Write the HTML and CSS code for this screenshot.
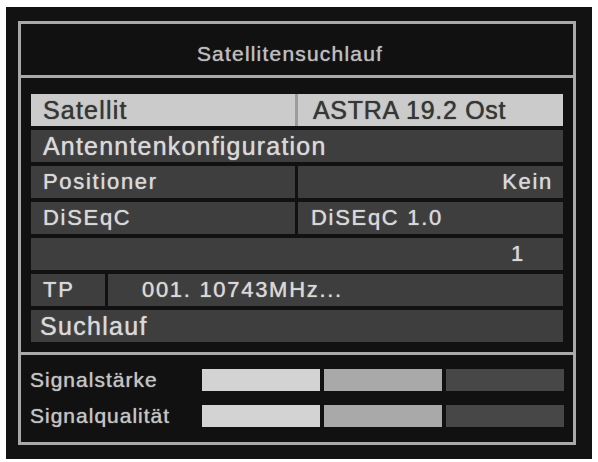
FILE: index.html
```html
<!DOCTYPE html>
<html lang="de">
<head>
<meta charset="utf-8">
<title>Satellitensuchlauf</title>
<link rel="stylesheet" href="styles.css">
</head>
<body>
<div class="screen">
  <div class="frame">
    <div class="title">Satellitensuchlauf</div>
    <div class="menu">
      <div class="row split sel">
        <div class="cell big">Satellit</div>
        <div class="cell big val astra">ASTRA 19.2 Ost</div>
      </div>
      <div class="row">
        <div class="cell big">Antenntenkonfiguration</div>
      </div>
      <div class="row split">
        <div class="cell">Positioner</div>
        <div class="cell right">Kein</div>
      </div>
      <div class="row split">
        <div class="cell">DiSEqC</div>
        <div class="cell val">DiSEqC 1.0</div>
      </div>
      <div class="row">
        <div class="cell right one">1</div>
      </div>
      <div class="row tp">
        <div class="cell">TP</div>
        <div class="cell tpval">001. 10743MHz...</div>
      </div>
      <div class="row">
        <div class="cell big suche">Suchlauf</div>
      </div>
    </div>
    <div class="signal">
      <div class="sigrow">
        <div class="label">Signalstärke</div>
        <div class="bars">
          <div class="bar b1"></div>
          <div class="bar b2"></div>
          <div class="bar b3"></div>
        </div>
      </div>
      <div class="sigrow">
        <div class="label">Signalqualität</div>
        <div class="bars">
          <div class="bar b1"></div>
          <div class="bar b2"></div>
          <div class="bar b3"></div>
        </div>
      </div>
    </div>
  </div>
</div>
</body>
</html>
```
FILE: styles.css
```css
html, body {
  margin: 0;
  padding: 0;
  background: #ffffff;
}

body {
  font-family: "Liberation Sans", Arial, sans-serif;
  color: #d6d6d6;
}

.screen {
  box-sizing: border-box;
  width: 586px;
  height: 452px;
  margin: 7px 0 0 6px;
  padding: 14px 16px 14px 12px;
  background: #121212;
}

.frame {
  box-sizing: border-box;
  height: 100%;
  border: 3px solid #a9a9a9;
  display: flex;
  flex-direction: column;
  background: #111111;
}

.title {
  box-sizing: border-box;
  height: 54px;
  padding: 8px 14px 0 0;
  line-height: 43px;
  font-size: 21px;
  letter-spacing: 1.2px;
  text-align: center;
  color: #bdbdbd;
  text-shadow: 0 0 1px #bdbdbd;
  border-bottom: 3px solid #a9a9a9;
}

.menu {
  box-sizing: border-box;
  height: 277px;
  padding: 16px 10px 13px 10px;
  display: flex;
  flex-direction: column;
  gap: 4px;
  border-bottom: 3px solid #a9a9a9;
}

.row {
  height: 32px;
  display: grid;
  grid-template-columns: 1fr;
}

.row.split {
  grid-template-columns: 264px 1fr;
  column-gap: 3px;
}

.row.tp {
  grid-template-columns: 74px 1fr;
  column-gap: 3px;
}

.cell {
  background: #3e3e3e;
  height: 32px;
  line-height: 32px;
  padding-left: 12px;
  font-size: 22px;
  letter-spacing: 1.7px;
  white-space: nowrap;
  color: #d8d8d8;
  text-shadow: 0 0 1px #d8d8d8;
}

.cell.big {
  font-size: 25px;
  letter-spacing: 1.2px;
}

.cell.suche {
  padding-left: 9px;
  letter-spacing: 1.3px;
}

.cell.val {
  padding-left: 13px;
}

.cell.astra {
  padding-left: 15px;
  letter-spacing: 0.7px;
}

.cell.right {
  text-align: right;
  padding-left: 0;
  padding-right: 10px;
}

.cell.one {
  padding-right: 38px;
}

.cell.tpval {
  padding-left: 34px;
}

.row.sel {
  background: #9c9c9c;
}

.row.sel .cell {
  background: #cbcbcb;
  color: #363636;
  text-shadow: 0 0 1px #363636;
}

.signal {
  flex: 1;
  padding: 14px 0 0 9px;
  display: flex;
  flex-direction: column;
  gap: 14px;
}

.sigrow {
  height: 22px;
  display: flex;
  align-items: center;
}

.label {
  width: 172px;
  font-size: 21px;
  letter-spacing: 1px;
  color: #c3c3c3;
  text-shadow: 0 0 1px #c3c3c3;
  white-space: nowrap;
}

.bars {
  display: flex;
  gap: 4px;
  height: 22px;
}

.bar {
  width: 118px;
  height: 22px;
}

.b1 {
  background: #d3d3d3;
}

.b2 {
  background: #a9a9a9;
}

.b3 {
  background: #474747;
}
```
